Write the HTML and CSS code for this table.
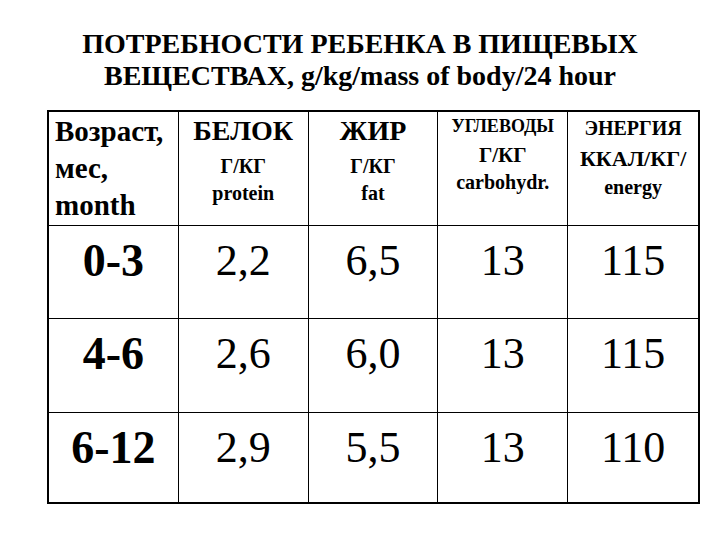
FILE: index.html
```html
<!DOCTYPE html>
<html>
<head>
<meta charset="utf-8">
<link rel="stylesheet" href="styles.css">
</head>
<body>
<div class="title">ПОТРЕБНОСТИ РЕБЕНКА В ПИЩЕВЫХ<br>ВЕЩЕСТВАХ, g/kg/mass of body/24 hour</div>
<div class="table">
  <div class="cell head first"><div class="age">Возраст,<br>мес,<br>month</div></div>
  <div class="cell head"><div class="big">БЕЛОК</div><div class="unit">Г/КГ</div><div class="sub">protein</div></div>
  <div class="cell head"><div class="big">ЖИР</div><div class="unit">Г/КГ</div><div class="sub">fat</div></div>
  <div class="cell head carb"><div class="cap">УГЛЕВОДЫ</div><div class="unit">Г/КГ</div><div class="sub">carbohydr.</div></div>
  <div class="cell head energy"><div class="cap">ЭНЕРГИЯ</div><div class="unit">ККАЛ/КГ/</div><div class="sub">energy</div></div>

  <div class="cell num bold">0-3</div>
  <div class="cell num">2,2</div>
  <div class="cell num">6,5</div>
  <div class="cell num">13</div>
  <div class="cell num">115</div>

  <div class="cell num bold">4-6</div>
  <div class="cell num">2,6</div>
  <div class="cell num">6,0</div>
  <div class="cell num">13</div>
  <div class="cell num">115</div>

  <div class="cell num bold bottom">6-12</div>
  <div class="cell num bottom">2,9</div>
  <div class="cell num bottom">5,5</div>
  <div class="cell num bottom">13</div>
  <div class="cell num bottom">110</div>
</div>
</body>
</html>
```
FILE: styles.css
```css
html {
  margin: 0;
  padding: 0;
  background: #ffffff;
}
body {
  margin: 0;
  padding: 0;
  width: 720px;
  height: 540px;
  overflow: hidden;
  color: #000000;
  font-family: "Liberation Serif", "Times New Roman", serif;
}
.title {
  font-family: "Liberation Serif", "Times New Roman", serif;
  margin: 0;
  padding-top: 28px;
  text-align: center;
  font-size: 28px;
  line-height: 32px;
  font-weight: bold;
}
.table {
  font-family: "Liberation Serif", "Times New Roman", serif;
  margin: 18px 0 0 47px;
  width: 653px;
  box-sizing: border-box;
  border: 2px solid #000;
  display: grid;
  grid-template-columns: repeat(5, 1fr);
  grid-template-rows: 114px 93px 94px 89px;
}
.cell {
  border-right: 1px solid #000;
  border-bottom: 1px solid #000;
  text-align: center;
}
.cell:nth-child(5n) {
  border-right: none;
}
.bottom {
  border-bottom: none;
}
.head {
  font-weight: bold;
  padding-top: 3px;
}
.first {
  text-align: left;
  padding-left: 6px;
  padding-top: 1px;
}
.age {
  font-size: 29px;
  line-height: 37px;
}
.big {
  font-size: 28px;
  line-height: 32px;
}
.unit {
  font-size: 20px;
  line-height: 38px;
}
.sub {
  font-size: 20px;
  line-height: 17px;
}
.carb .cap {
  font-size: 18px;
  line-height: 22px;
}
.carb .unit {
  font-size: 21px;
  line-height: 36px;
}
.carb .sub {
  font-size: 20px;
  line-height: 19px;
}
.energy .cap {
  font-size: 20px;
  line-height: 26px;
}
.energy .unit {
  font-size: 22px;
  line-height: 35px;
}
.energy .sub {
  font-size: 20px;
  line-height: 22px;
}
.num {
  font-size: 44px;
  line-height: 52px;
  padding-top: 9px;
}
.bold {
  font-weight: bold;
  font-size: 46px;
}
```
